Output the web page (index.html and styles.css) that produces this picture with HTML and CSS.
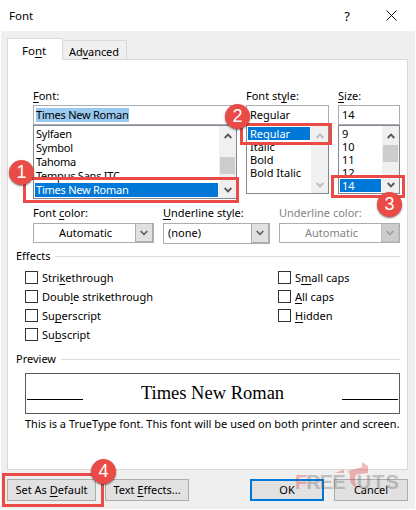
FILE: index.html
```html
<!DOCTYPE html>
<html lang="en">
<head>
<meta charset="utf-8">
<title>Font</title>
<link rel="stylesheet" href="styles.css">
</head>
<body>
<svg class="defs" width="0" height="0">
  <symbol id="down" viewBox="0 0 8 6"><path d="M.7 1 4 4.4 7.3 1"/></symbol>
  <symbol id="up" viewBox="0 0 8 6"><path d="M.7 5 4 1.6 7.3 5"/></symbol>
</svg>
<div class="window">
  <header class="titlebar">
    <span class="title">Font</span>
    <span class="help">?</span>
    <svg class="close" viewBox="0 0 11 11"><path d="M.5.5l10 10M10.5.5l-10 10"/></svg>
  </header>
  <main class="dialog">
    <nav class="tabs">
      <span class="tab active">Fo<u>n</u>t</span>
      <span class="tab">Ad<u>v</u>anced</span>
    </nav>
    <section class="panel">
      <div class="pickers">
        <div class="picker family">
          <label><u>F</u>ont:</label>
          <div class="field"><span class="marked">Times New Roman</span></div>
          <div class="list">
            <ul><li>Sylfaen</li><li>Symbol</li><li>Tahoma</li><li>Tempus Sans ITC</li><li class="selected">Times New Roman</li></ul>
            <div class="scroll"><svg><use href="#up"/></svg><i></i><svg><use href="#down"/></svg></div>
          </div>
        </div>
        <div class="picker style">
          <label>Font st<u>y</u>le:</label>
          <div class="field">Regular</div>
          <div class="list">
            <ul><li class="selected">Regular</li><li>Italic</li><li>Bold</li><li>Bold Italic</li></ul>
            <div class="scroll off"><svg><use href="#up"/></svg><svg><use href="#down"/></svg></div>
          </div>
        </div>
        <div class="picker size">
          <label><u>S</u>ize:</label>
          <div class="field">14</div>
          <div class="list">
            <ul><li>9</li><li>10</li><li>11</li><li>12</li><li class="selected">14</li></ul>
            <div class="scroll"><svg><use href="#up"/></svg><i></i><svg><use href="#down"/></svg></div>
          </div>
        </div>
      </div>
      <div class="combos">
        <div class="group color">
          <label>Font <u>c</u>olor:</label>
          <div class="combo"><span>Automatic</span><b><svg><use href="#down"/></svg></b></div>
        </div>
        <div class="group line">
          <label><u>U</u>nderline style:</label>
          <div class="combo"><span>(none)</span><b><svg><use href="#down"/></svg></b></div>
        </div>
        <div class="group color disabled">
          <label>Underline color:</label>
          <div class="combo"><span>Automatic</span><b><svg><use href="#down"/></svg></b></div>
        </div>
      </div>
      <h2 class="effects-title">Effects</h2>
      <div class="effects">
        <div class="checks">
          <label><i></i><span>Stri<u>k</u>ethrough</span></label>
          <label><i></i><span>Doub<u>l</u>e strikethrough</span></label>
          <label><i></i><span>Su<u>p</u>erscript</span></label>
          <label><i></i><span>Su<u>b</u>script</span></label>
        </div>
        <div class="checks">
          <label><i></i><span>S<u>m</u>all caps</span></label>
          <label><i></i><span><u>A</u>ll caps</span></label>
          <label><i></i><span><u>H</u>idden</span></label>
        </div>
      </div>
      <h2 class="preview-title">Preview</h2>
      <div class="preview"><i></i><span>Times New Roman</span><i></i></div>
      <p class="note">This is a TrueType font. This font will be used on both printer and screen.</p>
    </section>
    <footer class="buttons">
      <button class="default">Set As <u>D</u>efault</button>
      <button class="text-effects">Text <u>E</u>ffects...</button>
      <button class="ok">OK</button>
      <button class="cancel">Cancel</button>
    </footer>
  </main>
  <div class="watermark">
    <span class="wm-f">F</span><span class="wm-ree">REE</span>
    <svg viewBox="0 0 34 28"><path d="M0 11 9 7.500v3.500zM13 9 27 5V0l6 4v7l-12 1.500c-2 5-1 10 2 14.500-7-3-9-9-8-14z"/></svg>
    <span class="wm-uts">UTS</span>
  </div>
  <div class="frame frame1"></div><div class="frame frame2"></div>
  <div class="frame frame3"></div><div class="frame frame4"></div>
  <div class="dot dot1">1</div><div class="dot dot2">2</div>
  <div class="dot dot3">3</div><div class="dot dot4">4</div>
</div>
</body>
</html>
```
FILE: styles.css
```css
* { box-sizing: border-box; }
body { margin: 0; background: #fff; color: #000; font: 11px/14px "Noto Sans", "Open Sans", sans-serif; }
.defs { position: absolute; }
.window { position: relative; width: 416px; height: 510px; overflow: hidden; }
u { text-decoration: underline; text-decoration-thickness: 1px; text-underline-offset: 2px; text-decoration-skip-ink: none; }
svg { fill: none; stroke: #555; stroke-width: 1.5; }
ul, p, h2 { margin: 0; padding: 0; list-style: none; }

.titlebar { display: flex; align-items: center; height: 31px; padding: 0 19px 0 9px; }
.title { flex: 1; font-size: 11.5px; }
.help { margin-right: 36px; font-size: 13px; }
.close { width: 11px; height: 11px; stroke: #111; stroke-width: 1; }

.dialog { height: 478px; margin: 0 1px; padding: 7px 7px 0 6px; background: #efefef; }
.tabs { display: flex; align-items: flex-end; height: 21px; }
.tab { height: 19px; width: 64px; padding: 4px 0 0 6px; border: 1px solid #d9d9d9; border-width: 1px 1px 0 0; white-space: nowrap; letter-spacing: -.1px; }
.tab.active { position: relative; height: 22px; width: 56px; margin-bottom: -1px; padding: 5px 0 0 14px; background: #fff; border-left-width: 1px; font-size: 11.5px; letter-spacing: 0; }
.panel { width: 401px; height: 411px; padding: 29px 0 0 8px; background: #fff; border: 1px solid #d9d9d9; }

.pickers { display: flex; gap: 9px; height: 117px; margin-left: 17px; }
.picker label, .group label { display: block; height: 17px; white-space: nowrap; }
.picker label { height: 16px; }
.family { width: 204px; }
.style { width: 83px; }
.size { width: 62px; }
.field { height: 20px; padding: 2px; border: 1px solid #abadb3; }
.style .field { padding-left: 3px; }
.size .field { padding-left: 3px; }
.marked { display: inline-block; height: 14px; background: #99c9ef; }
.family .field, .family .list { letter-spacing: -.24px; }
.list { display: flex; height: 69px; padding: 1px 0 1px 1px; border: 1px solid #828790; }
.family .list { height: 74px; }
.list ul { flex: 1; min-width: 0; overflow: hidden; }
.list li { height: 13px; padding-left: 2px; line-height: 13px; white-space: nowrap; }
.family li { height: 14px; padding-left: 1px; line-height: 14px; }
.selected { background: #0078d7; color: #fff; }
.scroll { display: flex; flex-direction: column; align-items: center; width: 17px; margin: -1px 0 -1px 1px; padding: 7px 0 5px; background: #f0f0f0; }
.scroll svg { width: 8px; height: 6px; stroke-width: 1.8; }
.scroll i { width: 15px; height: 17px; margin-top: 18px; background: #cdcdcd; }
.size .scroll i { margin-top: 6px; }
.scroll svg:last-child { margin-top: auto; }
.off { justify-content: space-between; }
.off svg { stroke: #bbb; }

.combos { display: flex; gap: 9px; margin-left: 17px; height: 39px; }
.group.color { width: 121px; }
.group.line { width: 107px; }
.combo { display: flex; height: 20px; border: 1px solid #abadb3; }
.line .combo { height: 21px; }
.combo span { flex: 1; padding: 2px 0 0 4px; }
.color .combo span { padding-left: 25px; }
.combo b { display: grid; place-items: center; width: 18px; background: #e1e1e1; border: 1px solid #abadb3; border-width: 0 1px 1px 1px; }
.combo b svg { width: 8px; height: 6px; }
.disabled { color: #838383; }
.disabled .combo b { background: #ccc; border-color: #bfbfbf; }
.disabled svg { stroke: #999; }

h2 { display: flex; align-items: center; gap: 5px; width: 384px; height: 14px; font: inherit; }
h2::after { content: ""; flex: 1; height: 1px; background: #dcdcdc; }
.effects-title { margin-top: 4px; }
.effects { display: flex; height: 89px; padding: 8px 0 0 9px; }
.checks { flex: none; width: 253px; }
.checks + .checks { width: 120px; }
.checks label { display: flex; gap: 4px; height: 19px; white-space: nowrap; }
.checks i { width: 13px; height: 13px; border: 1px solid #333; }
.preview { display: flex; justify-content: space-between; width: 375px; height: 41px; margin: 7px 0 0 9px; padding: 0 1px; border: 1px solid #5a5a5a; font: 18.5px/38px "Liberation Serif", serif; }
.preview i { width: 56px; height: 1px; margin-top: 25px; background: #000; }
.note { margin: 3px 0 0 9px; white-space: nowrap; }

.buttons { display: flex; margin-top: 9px; }
button { height: 22px; padding: 0; border: 1px solid #adadad; background: #e1e1e1; color: #000; font: inherit; white-space: nowrap; }
.default { width: 89px; margin-right: 9px; }
.text-effects { width: 84px; margin-right: 61px; }
.ok { width: 74px; margin-right: 10px; border: 2px solid #0078d7; }
.cancel { width: 74px; }

.watermark { position: absolute; left: 295px; top: 462px; display: flex; opacity: .3; color: #555; font: bold 20px/41px "Liberation Sans", sans-serif; letter-spacing: -.9px; }
.watermark svg { width: 34px; height: 28px; margin: 0 -12px 0 -10px; stroke: none; fill: #d22; }
.wm-f { color: #d22; }
.wm-uts { letter-spacing: 1px; }
.frame { position: absolute; border: 3px solid #ea4b46; }
.frame1 { left: 23px; top: 177px; width: 216px; height: 26px; }
.frame2 { left: 240px; top: 123px; width: 92px; height: 22px; }
.frame3 { left: 331px; top: 175px; width: 74px; height: 23px; }
.frame4 { left: 2px; top: 473px; width: 102px; height: 34px; }
.dot { position: absolute; width: 25px; height: 25px; border-radius: 50%; background: #ea4b46; box-shadow: 0 1px 2px #0008; color: #fff; font: 18px/25px "Liberation Sans", sans-serif; text-align: center; }
.dot1 { left: 9px; top: 160px; }
.dot2 { left: 225px; top: 104px; }
.dot3 { left: 377px; top: 192px; }
.dot4 { left: 91px; top: 459px; }
```
